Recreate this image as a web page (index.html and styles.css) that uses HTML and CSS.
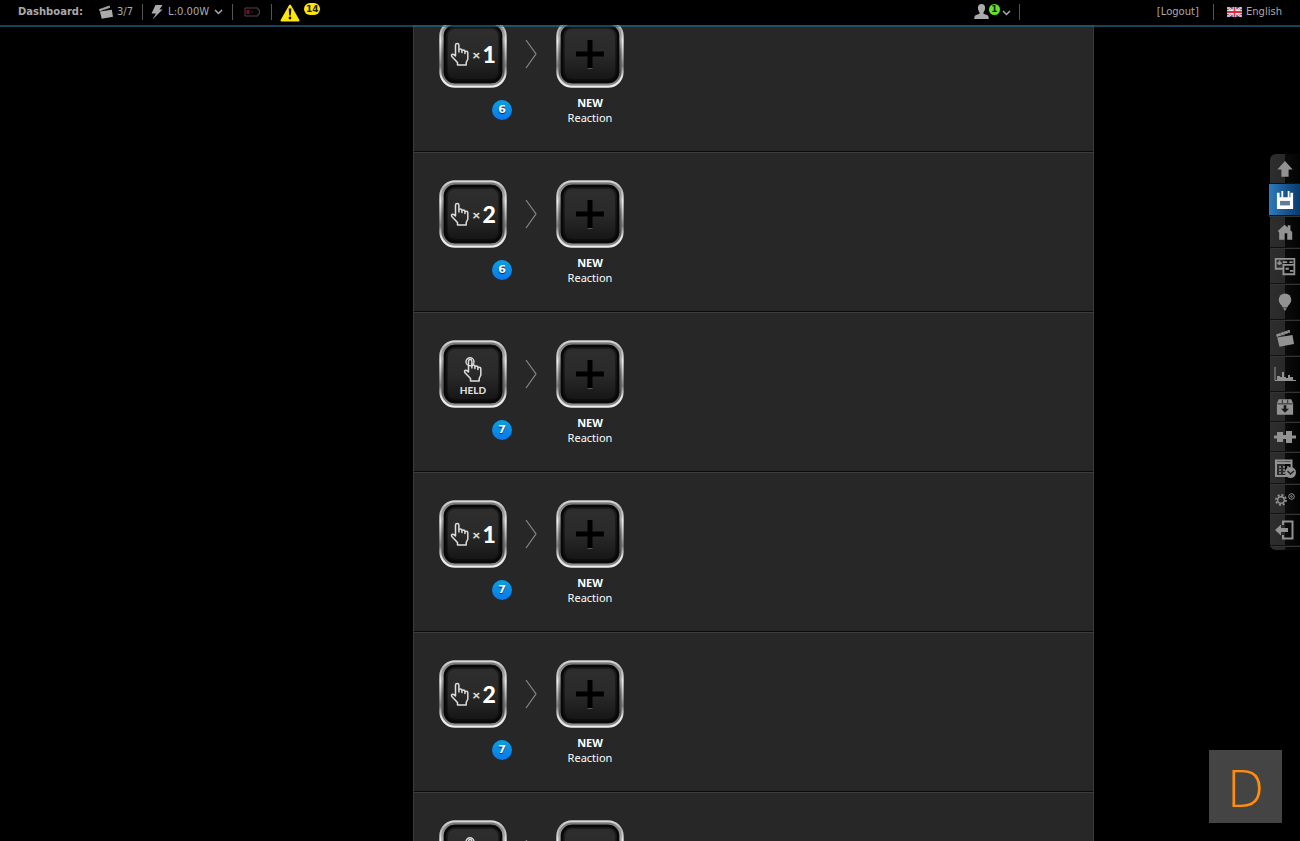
FILE: index.html
```
<!DOCTYPE html>
<html lang="en">
<head>
<meta charset="utf-8">
<title>Dashboard</title>
<link rel="stylesheet" href="styles.css">
</head>
<body>
<svg class="defs" aria-hidden="true">
  <defs>
    <linearGradient id="metal" x1="0" y1="0" x2="0" y2="1">
      <stop offset="0" stop-color="#d8d8d8"/><stop offset=".12" stop-color="#b0b0b0"/><stop offset=".3" stop-color="#eee"/><stop offset=".5" stop-color="#b8b8b8"/><stop offset=".68" stop-color="#808080"/><stop offset=".85" stop-color="#e4e4e4"/><stop offset="1" stop-color="#eee"/>
    </linearGradient>
    <linearGradient id="ring" x1="0" y1="0" x2="0" y2="1">
      <stop offset="0" stop-color="#777"/><stop offset=".25" stop-color="#aaa"/><stop offset=".5" stop-color="#666"/><stop offset=".8" stop-color="#555"/><stop offset="1" stop-color="#888"/>
    </linearGradient>
    <linearGradient id="face" x1="0" y1="0" x2="0" y2="1">
      <stop offset="0" stop-color="#2e2e2e"/><stop offset=".5" stop-color="#2a2a2a"/><stop offset="1" stop-color="#141414"/>
    </linearGradient>
  </defs>
  <symbol id="frame" viewBox="0 0 68 68">
    <rect width="68" height="68" rx="16" fill="#161616"/>
    <rect x="3.500" y="3.500" width="61" height="61" rx="12.500" fill="#0a0a0a" stroke="url(#ring)" stroke-width="2.600"/>
    <rect x="1.400" y="1.400" width="65.200" height="65.200" rx="14.500" fill="none" stroke="url(#metal)" stroke-width="2.200"/>
    <rect x="6" y="6" width="56" height="56" rx="10" fill="url(#face)" stroke="#080808" stroke-width="2.500"/>
    <rect x="8" y="8" width="52" height="52" rx="8" fill="none" stroke="#000" stroke-opacity=".35" stroke-width="2"/>
  </symbol>
  <symbol id="hand" viewBox="0 0 20 26">
    <path d="M5.500 15V4.200a1.700 1.700 0 0 1 3.400 0V11V9.500a1.500 1.500 0 0 1 3 0V11.500V10.400a1.500 1.500 0 0 1 3 0V12.400V11.600a1.400 1.400 0 0 1 2.900 0V18L16.200 21.500V24H7.500V21.500L1.800 15.400Q1 13.700 2.500 13.200Q4 13 5.500 15Z" fill="none" stroke="#ddd" stroke-width="1.500" stroke-linejoin="round"/>
  </symbol>
  <symbol id="chevron" viewBox="0 0 12 30"><path d="M1 1L11 15L1 29" fill="none" stroke="#888" stroke-width="1.200"/></symbol>
  <symbol id="plus" viewBox="0 0 30 30"><path d="M12.500 1h5V12.500H29v5H17.500v11.500h-5V17.500H1V12.500h11.500z" fill="#000"/><path d="M12.500 29.500h5" stroke="#555" stroke-width="1"/></symbol>
  <symbol id="clapper" viewBox="0 0 18 18"><path d="M0 5.500L13.500 .8L14.300 3.600L.8 8zM1.200 8.500L16.500 6L18 15L3.500 17.800z"/><path d="M4 4.400l2 1.800M7.500 3.200l2 1.800M11 2l2 1.800" stroke="#444" stroke-width=".6"/></symbol>
</svg>

<header class="topbar">
  <div class="stats">
    <b class="title">Dashboard:</b>
    <a class="stat" href="#scenes"><svg class="i14"><use href="#clapper"/></svg>3/7</a>
    <button class="stat split power"><svg class="bolt" viewBox="0 0 12 16"><path d="M4.500 1H11.500L8.500 5.500H11.500L1.500 15.500L5 9.500H.5z"/></svg>L:0.00W<svg class="caret" viewBox="0 0 9 6"><path d="M1 1L4.500 4.500L8 1"/></svg></button>
    <button class="stat split battery" aria-label="Battery"><svg viewBox="0 0 16 10"><path d="M1 1H14V3H15.500V7H14V9H1z" fill="none" stroke="#564048"/><rect x="2.500" y="3" width="3" height="4" fill="#7b1028"/><path d="M7 5h2" stroke="#681828"/></svg></button>
    <button class="stat split alert"><svg viewBox="0 0 20 18"><path d="M10 1.500L18.500 16.500H1.500z" fill="#ffe60a" stroke="#ffe60a" stroke-width="2" stroke-linejoin="round"/><path d="M8.700 4.500h2.600L10.800 11.500H9.200z" fill="#111"/><circle cx="10" cy="14" r="1.400" fill="#111"/></svg><span class="count yellow">14</span></button>
  </div>
  <div class="account">
    <button class="user"><svg class="person" viewBox="0 0 15 15"><path d="M7.500 0C10 0 11.300 1.700 11.100 4.200C11 6.500 10 7.400 9.500 8.300V9.700L13.500 11.300Q14.800 12 14.800 15H.2Q.2 12 1.500 11.300L5.500 9.700V8.300C5 7.400 4 6.500 3.900 4.200C3.700 1.700 5 0 7.500 0z"/></svg><span class="count green">1</span><svg class="caret" viewBox="0 0 9 6"><path d="M1 1L4.500 4.500L8 1"/></svg></button>
    <a class="logout" href="#logout">[Logout]</a>
    <a class="language" href="#language"><svg viewBox="0 0 15 10"><rect width="15" height="10" fill="#42538e"/><path d="M0 0L15 10M15 0L0 10" stroke="#fff" stroke-width="2"/><path d="M0 0L15 10M15 0L0 10" stroke="#e45660" stroke-width=".8"/><path d="M7.500 0V10M0 5H15" stroke="#fff" stroke-width="3.500"/><path d="M7.500 0V10M0 5H15" stroke="#e02b3b" stroke-width="1.800"/></svg>English</a>
  </div>
</header>

<main class="panel">
  <section class="row">
    <div class="trigger"><button class="tile"><svg class="frame"><use href="#frame"/></svg><svg class="hand"><use href="#hand"/></svg><span class="times">×</span><b class="num">1</b></button><span class="badge">6</span></div>
    <svg class="chevron"><use href="#chevron"/></svg>
    <div class="reaction"><button class="tile" aria-label="New reaction"><svg class="frame"><use href="#frame"/></svg><svg class="plus"><use href="#plus"/></svg></button><p><b>NEW</b><br>Reaction</p></div>
  </section>
  <section class="row">
    <div class="trigger"><button class="tile"><svg class="frame"><use href="#frame"/></svg><svg class="hand"><use href="#hand"/></svg><span class="times">×</span><b class="num">2</b></button><span class="badge">6</span></div>
    <svg class="chevron"><use href="#chevron"/></svg>
    <div class="reaction"><button class="tile" aria-label="New reaction"><svg class="frame"><use href="#frame"/></svg><svg class="plus"><use href="#plus"/></svg></button><p><b>NEW</b><br>Reaction</p></div>
  </section>
  <section class="row">
    <div class="trigger"><button class="tile held"><svg class="frame"><use href="#frame"/></svg><svg class="press" viewBox="0 0 20 26"><use href="#hand" width="20" height="26"/><circle cx="7" cy="4.800" r="4" fill="none" stroke="#ddd" stroke-width="1.400"/></svg><b>HELD</b></button><span class="badge">7</span></div>
    <svg class="chevron"><use href="#chevron"/></svg>
    <div class="reaction"><button class="tile" aria-label="New reaction"><svg class="frame"><use href="#frame"/></svg><svg class="plus"><use href="#plus"/></svg></button><p><b>NEW</b><br>Reaction</p></div>
  </section>
  <section class="row">
    <div class="trigger"><button class="tile"><svg class="frame"><use href="#frame"/></svg><svg class="hand"><use href="#hand"/></svg><span class="times">×</span><b class="num">1</b></button><span class="badge">7</span></div>
    <svg class="chevron"><use href="#chevron"/></svg>
    <div class="reaction"><button class="tile" aria-label="New reaction"><svg class="frame"><use href="#frame"/></svg><svg class="plus"><use href="#plus"/></svg></button><p><b>NEW</b><br>Reaction</p></div>
  </section>
  <section class="row">
    <div class="trigger"><button class="tile"><svg class="frame"><use href="#frame"/></svg><svg class="hand"><use href="#hand"/></svg><span class="times">×</span><b class="num">2</b></button><span class="badge">7</span></div>
    <svg class="chevron"><use href="#chevron"/></svg>
    <div class="reaction"><button class="tile" aria-label="New reaction"><svg class="frame"><use href="#frame"/></svg><svg class="plus"><use href="#plus"/></svg></button><p><b>NEW</b><br>Reaction</p></div>
  </section>
  <section class="row">
    <div class="trigger"><button class="tile held" aria-label="Held"><svg class="frame"><use href="#frame"/></svg><svg class="press" viewBox="0 0 20 26"><use href="#hand" width="20" height="26"/><circle cx="7" cy="4.800" r="4" fill="none" stroke="#ddd" stroke-width="1.400"/></svg></button></div>
    <svg class="chevron"><use href="#chevron"/></svg>
    <div class="reaction"><button class="tile" aria-label="New reaction"><svg class="frame"><use href="#frame"/></svg></button></div>
  </section>
</main>

<nav class="side" aria-label="Tools">
  <button class="short" aria-label="Top"><svg viewBox="0 0 20 20"><path d="M10 1L18.500 10.500H14V18.500H6V10.500H1.500z"/></svg></button>
  <button class="active" aria-label="Save"><svg viewBox="0 0 20 20"><path d="M1 2H4V7H6V0H8V7H13V0H15V7H16V2H19V20H1z"/><path d="M4.500 11H15.500V16H4.500z" fill="#627b91"/></svg></button>
  <button aria-label="Home"><svg viewBox="0 0 20 20"><path d="M2 9L9.500 2L13 5V2.500H16V8L18 10V18.500H12.500V11.500H9.500V18.500H3.500V10.500z"/></svg></button>
  <button class="tall" aria-label="Rooms"><svg class="wide" viewBox="0 0 20 18"><path d="M1.500 2.500H18.500V16.500H8.500V11.500H1.500zM8.500 11.500V8H18M3 6.500h4M8 5.500h4M14 5.500h3M10.500 11.500h3M14.500 13.500h3M5 4v4" fill="none" stroke="#929292" stroke-width="1.600"/></svg></button>
  <button class="tall" aria-label="Lights"><svg viewBox="0 0 20 20"><circle cx="10" cy="7.500" r="7"/><path d="M5 11.500h10L12.500 16H7.500zM8 17h4L10 20z"/></svg></button>
  <button class="tall" aria-label="Scenes"><svg><use href="#clapper"/></svg></button>
  <button class="tall" aria-label="Statistics"><svg class="wide" viewBox="0 0 22 18"><path d="M1 2V15.500H22" fill="none" stroke="#929292"/><path d="M3 15V11H6V12H8V7H10V12H12V13H14V10H16V12H19V15z"/></svg></button>
  <button class="short" aria-label="Archive"><svg viewBox="0 0 20 20"><path d="M3 1.500H17L19 6V18.500H1V6z"/><path d="M1.500 6.500h17M7 2v4M13 2v4" stroke="#222"/><path d="M8.500 8H11.500V12H14.500L10 16.500L5.500 12H8.500z" fill="#191919"/></svg></button>
  <button class="short" aria-label="Plugins"><svg class="wide" viewBox="0 0 22 18"><path d="M0 7.500H3V4H9V7H12V3H18V7.500H22V10.500H18V15H12V11H9V14H3V10.500H0z"/></svg></button>
  <button aria-label="Schedule"><svg class="wide" viewBox="0 0 22 20"><path d="M2 2.500H17.500V18H2z" fill="none" stroke="#929292" stroke-width="2"/><path d="M2 5h15" stroke="#929292" stroke-width="2"/><path d="M5 9h2M9 9h2M13 9h2M5 12h2M9 12h2M5 15h2M9 15h2" stroke="#929292" stroke-width="1.500"/><circle cx="16.500" cy="14.500" r="5.500"/><path d="M13.500 13L16.500 16L20 13" fill="none" stroke="#222" stroke-width="1.500"/></svg></button>
  <button class="short" aria-label="Settings"><svg class="wide" viewBox="0 0 22 18"><g fill="none" stroke="#929292"><circle cx="7" cy="10" r="3.300" stroke-width="1.400"/><circle cx="7" cy="10" r="5" stroke-width="1.800" stroke-dasharray="2 1.900"/><circle cx="17.500" cy="6.500" r="2.800"/><circle cx="17.500" cy="6.500" r=".8"/></g></svg></button>
  <button aria-label="Exit"><svg class="wide" viewBox="0 0 20 20"><path d="M8 5V1.500H17.500V18.500H8V15" fill="none" stroke="#929292" stroke-width="2"/><path d="M0 10L6 4.500V8H13V12H6V15.500z"/></svg></button>
</nav>

<button class="corner" aria-label="Open D panel">D</button>
</body>
</html>
```
FILE: styles.css
```
* { box-sizing: border-box; }
body {
  margin: 0;
  background: #000;
  overflow: hidden;
  height: 100vh;
  color: #aaa;
  font: 10px/16px "DejaVu Sans", Verdana, sans-serif;
}
button { margin: 0; padding: 0; border: 0; background: none; color: inherit; font: inherit; cursor: pointer; }
a { color: inherit; text-decoration: none; }
svg { display: block; flex: none; }
.defs { position: absolute; width: 0; height: 0; }

.topbar {
  position: fixed;
  inset: 0 0 auto;
  z-index: 2;
  height: 27px;
  display: flex;
  justify-content: space-between;
  padding: 4px 18px 0;
  background: #000 padding-box;
  border-bottom: 2px solid rgba(43, 107, 148, .6);
  fill: #aaa;
}
.stats, .account { display: flex; align-items: flex-start; }
.title { margin-right: 16px; }
.stat { display: flex; align-items: center; height: 16px; }
.split { border-left: 1px solid #555; margin-left: 9px; padding-left: 8px; }
.i14 { width: 18px; height: 18px; margin: 0 2px 0 -2px; padding: 2px; }
.i14 { width: 14px; height: 14px; padding: 0; margin: 0 4px 0 0; }
.bolt { width: 12px; height: 16px; margin-right: 5px; }
.caret { width: 9px; height: 6px; margin-left: 5px; fill: none; stroke: #aaa; stroke-width: 1.5; }
.battery { padding-left: 11px; }
.battery svg { width: 16px; height: 10px; }
.alert { margin-left: 11px; align-items: flex-start; }
.alert svg { width: 20px; height: 18px; }
.count { display: block; border-radius: 8px; color: #222; text-align: center; font-weight: 700; }
.yellow { width: 16px; height: 12px; margin: -1px 0 0 4px; background: #ffe60a; font-size: 9px; line-height: 12px; }
.green { width: 11px; height: 11px; background: #62e32d; font-size: 9px; line-height: 11px; }
.user { display: flex; height: 16px; padding-right: 8px; margin-right: 137px; border-right: 1px solid #555; }
.person { width: 15px; height: 15px; }
.user .caret { margin: 6px 0 0 2px; }
.logout { margin-right: 14px; }
.language { display: flex; align-items: center; border-left: 1px solid #555; padding-left: 13px; }
.language svg { width: 15px; height: 10px; margin-right: 4px; }

.panel {
  margin: -9px 206px 0 413px;
  background: #272727;
  border: solid #3a3a3a;
  border-width: 0 1px;
}
.row {
  height: 160px;
  display: flex;
  align-items: flex-start;
  padding: 27px 25px 0;
  border-top: 1px solid #0a0a0a;
  box-shadow: inset 0 1px #3c3c3c;
  font: 11px/15px "Noto Sans", "Open Sans", sans-serif;
  color: #fff;
}
.trigger, .reaction { width: 68px; }
.tile {
  position: relative;
  isolation: isolate;
  display: flex;
  align-items: center;
  justify-content: center;
  width: 68px;
  height: 68px;
  margin-top: 1px;
  font-family: Lato, sans-serif;
  color: #fff;
}
.frame { position: absolute; inset: 0; width: 100%; height: 100%; z-index: -1; }
.hand { width: 20px; height: 26px; }
.times { margin: 0 2px; font-size: 14px; font-weight: 900; color: #ddd; }
.num { font-size: 23px; font-weight: 900; }
.held { flex-direction: column; font-size: 10px; line-height: 12px; justify-content: flex-start; padding-top: 17px; color: #ddd; }
.held b { font-weight: 900; }
.press { width: 20px; height: 26px; margin-bottom: 1px; }
.plus { width: 30px; height: 30px; }
.chevron { width: 12px; height: 30px; margin: 20px 19px 0 18px; }
.badge {
  display: block;
  width: 20px;
  height: 20px;
  margin: 12px 0 0 53px;
  border-radius: 10px;
  background: linear-gradient(#0aa0e0, #0878f0);
  font: bold 11px/20px "DejaVu Sans", sans-serif;
  text-align: center;
  text-shadow: 0 1px 1px #024;
}
.reaction p { margin: 7px 0 0; text-align: center; }

.side {
  position: fixed;
  top: 154px;
  right: 0;
  z-index: 3;
  width: 30px;
  padding-bottom: 4px;
  border-radius: 6px 0 0 6px;
  background: linear-gradient(90deg, #2e2e2e 0, #292929 15px, #0b0b0b 15px, #030303);
  fill: #929292;
}
.side button {
  width: 30px;
  height: 32px;
  display: flex;
  align-items: center;
  justify-content: center;
  border-bottom: 1px solid #111;
  box-shadow: 0 1px #333;
}
.side .short { height: 30px; }
.side .tall { height: 36px; }
.side svg { width: 18px; height: 18px; }
.side .wide { width: 22px; height: 20px; }
.side .active { width: 31px; margin-left: -1px; background: linear-gradient(90deg, #2d7cbd, #17518a 60%, #073b70); fill: #fff; }

.corner {
  position: fixed;
  right: 18px;
  bottom: 18px;
  width: 73px;
  height: 73px;
  background: #444;
  color: #ff8c0a;
  font: 300 52px/69px "Open Sans", "Noto Sans", sans-serif;
}
```
